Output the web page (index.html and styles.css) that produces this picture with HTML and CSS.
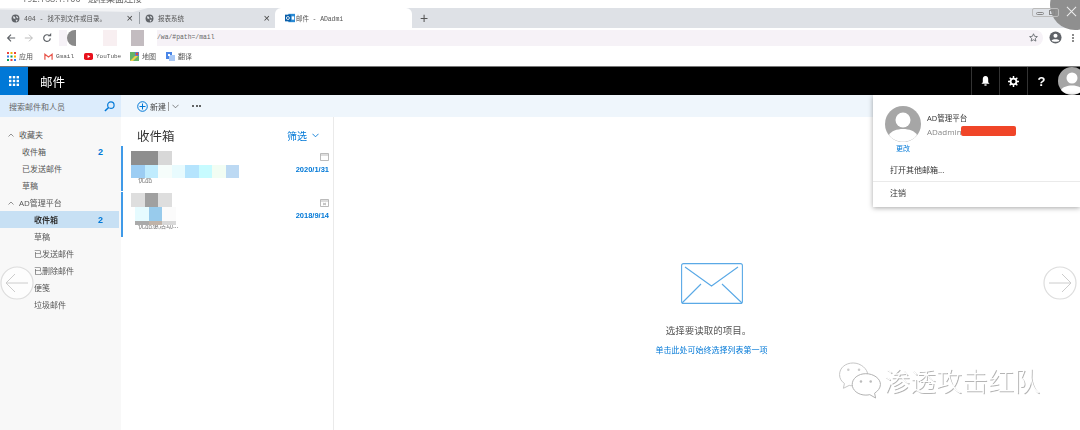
FILE: index.html
```html
<!DOCTYPE html>
<html lang="en">
<head>
    <meta charset="UTF-8">
    <title>邮件 - ADadmin</title>
    <link rel="stylesheet" href="styles.css">
</head>
<body>
<div class="page">
    <div class="rdp-strip"><span>192.168.1.100 - 远程桌面连接</span></div>

    <!-- browser tabs -->
    <div class="tabs">
        <div class="tab tab-first">
            <svg class="globe" viewBox="0 0 16 16"><circle cx="8" cy="8" r="7" fill="#5f6368"/><path d="M3 4l4 1 1 3-3 1zM10 3l3 3-2 2-2-3zM8 10l4 0-2 4z" fill="#dee1e6"/></svg>
            <span class="tab-title">404 - 找不到文件或目录。</span>
            <span class="tab-close">×</span>
        </div>
        <div class="tab-sep"></div>
        <div class="tab tab-second">
            <svg class="globe" viewBox="0 0 16 16"><circle cx="8" cy="8" r="7" fill="#5f6368"/><path d="M3 4l4 1 1 3-3 1zM10 3l3 3-2 2-2-3zM8 10l4 0-2 4z" fill="#dee1e6"/></svg>
            <span class="tab-title">报表系统</span>
            <span class="tab-close">×</span>
        </div>
        <div class="tab tab-active">
            <svg class="outlook" viewBox="0 0 12 12"><rect x="4" y="1" width="8" height="10" fill="#2a8ad4"/><rect x="0" y="2" width="7" height="8" fill="#0a5ea8"/><circle cx="3.5" cy="6" r="1.8" fill="none" stroke="#fff" stroke-width="1"/><path d="M8 4h3v4H8z" fill="#fff"/></svg>
            <span class="tab-title">邮件 - ADadmi</span>
        </div>
        <span class="tab-new">+</span>
    </div>

    <!-- browser toolbar -->
    <div class="toolbar">
        <svg class="nav-btn" viewBox="0 0 12 12"><path d="M11 6H2M6 2L2 6l4 4" fill="none" stroke="#5f6368" stroke-width="1.4"/></svg>
        <svg class="nav-btn nav-next" viewBox="0 0 12 12"><path d="M1 6h9M6 2l4 4-4 4" fill="none" stroke="#bbb" stroke-width="1.2"/></svg>
        <svg class="nav-btn nav-reload" viewBox="0 0 12 12"><path d="M10 6.5A4 4 0 1 1 8.800 3.200" fill="none" stroke="#5f6368" stroke-width="1.4"/><path d="M7 4h4V0z" fill="#5f6368"/></svg>
        <div class="omnibox">
            <div class="url-mosaic">
                <i class="um1"></i><i class="um2"></i><i class="um3"></i><i class="um4"></i><i class="um5"></i><i class="um6"></i>
            </div>
            <span class="url">/wa/#path=/mail</span>
            <svg class="star" viewBox="0 0 12 12"><path d="M6 1l1.500 3.400 3.700.4-2.800 2.400.8 3.600L6 9l-3.200 1.800.8-3.600L.8 4.800l3.700-.4z" fill="none" stroke="#5f6368" stroke-width="1.100"/></svg>
        </div>
        <svg class="profile" viewBox="0 0 14 14"><circle cx="7" cy="7" r="6.500" fill="#5f6368"/><circle cx="7" cy="5.200" r="2.200" fill="#fff"/><path d="M2.800 10.500c1-2 7.400-2 8.400 0-1.200 1.400-7.200 1.400-8.400 0z" fill="#fff"/></svg>
        <div class="kebab"><i></i><i></i><i></i></div>
    </div>

    <!-- bookmarks -->
    <div class="bookmarks">
        <span class="bm bm-apps">
            <svg class="bm-icon" viewBox="0 0 9 9"><rect x="0" y="0" width="2" height="2" fill="#e8453c"/><rect x="3.500" y="0" width="2" height="2" fill="#f4b400"/><rect x="7" y="0" width="2" height="2" fill="#e8453c"/><rect x="0" y="3.500" width="2" height="2" fill="#3b7de8"/><rect x="3.500" y="3.500" width="2" height="2" fill="#0f9d58"/><rect x="7" y="3.500" width="2" height="2" fill="#f4b400"/><rect x="0" y="7" width="2" height="2" fill="#0f9d58"/><rect x="3.500" y="7" width="2" height="2" fill="#e8453c"/><rect x="7" y="7" width="2" height="2" fill="#3b7de8"/></svg>
            应用
        </span>
        <span class="bm bm-gmail">
            <svg class="bm-icon" viewBox="0 0 10 9"><path d="M1 8V2l4 3 4-3v6" fill="none" stroke="#e8574c" stroke-width="1.400"/></svg>
            <em>Gmail</em>
        </span>
        <span class="bm bm-youtube">
            <svg class="bm-icon" viewBox="0 0 10 8"><rect width="10" height="8" rx="2" fill="#e8101c"/><path d="M4 2.300v3.400L7 4z" fill="#fff"/></svg>
            <em>YouTube</em>
        </span>
        <span class="bm bm-maps">
            <svg class="bm-icon" viewBox="0 0 9 9"><rect width="9" height="9" fill="#66b36b"/><path d="M0 9l9-9v3L3 9z" fill="#f2d14c"/><path d="M5 0h4v4H5z" fill="#4a86e8"/><circle cx="7" cy="2" r="1.400" fill="#dd4b3e"/></svg>
            地图
        </span>
        <span class="bm bm-translate">
            <svg class="bm-icon" viewBox="0 0 9 9"><rect width="6" height="7" fill="#4a86e8"/><rect x="3" y="3" width="6" height="6" fill="#a9c8f5"/><path d="M2 2h2v2H2z" fill="#fff"/></svg>
            翻译
        </span>
    </div>

    <!-- owa header -->
    <header class="owa-header">
        <div class="waffle">
            <svg viewBox="0 0 10 10" width="10" height="10" fill="#fff"><rect width="2.400" height="2.400"/><rect x="3.800" width="2.400" height="2.400"/><rect x="7.600" width="2.400" height="2.400"/><rect y="3.800" width="2.400" height="2.400"/><rect x="3.800" y="3.800" width="2.400" height="2.400"/><rect x="7.600" y="3.800" width="2.400" height="2.400"/><rect y="7.600" width="2.400" height="2.400"/><rect x="3.800" y="7.600" width="2.400" height="2.400"/><rect x="7.600" y="7.600" width="2.400" height="2.400"/></svg>
        </div>
        <div class="owa-title">邮件</div>
        <div class="owa-icons">
            <div class="owa-icon"><svg viewBox="0 0 10 11" width="9" height="10"><path d="M5 0c2.200 0 3 1.800 3 3.500V7l1.500 1.500h-9L2 7V3.500C2 1.800 2.800 0 5 0z" fill="#fff"/><rect x="3.800" y="9.200" width="2.400" height="1.500" fill="#fff"/></svg></div>
            <div class="owa-icon"><svg viewBox="0 0 12 12" width="11" height="11"><circle cx="6" cy="6" r="3.200" fill="none" stroke="#fff" stroke-width="2"/><path d="M6 0v2.500M6 9.500V12M0 6h2.500M9.500 6H12M1.800 1.800l1.800 1.800M8.400 8.400l1.800 1.800M10.200 1.800L8.400 3.600M3.600 8.400l-1.800 1.800" stroke="#fff" stroke-width="1.600"/></svg></div>
            <div class="owa-icon owa-help">?</div>
            <div class="owa-avatar">
                <svg viewBox="0 0 28 28" width="28" height="28"><circle cx="14" cy="14" r="14" fill="#a6a6a6"/><circle cx="14" cy="11" r="5.500" fill="#fff"/><path d="M3 23c3-6 19-6 22 0-5 6-17 6-22 0z" fill="#fff"/></svg>
            </div>
        </div>
    </header>

    <div class="owa-body">
        <aside class="sidebar">
            <div class="search">
                <span>搜索邮件和人员</span>
                <svg viewBox="0 0 12 12" width="11" height="11"><circle cx="7.500" cy="4.500" r="3.500" fill="none" stroke="#0078d7" stroke-width="1.300"/><path d="M5 7l-4 4" stroke="#0078d7" stroke-width="1.600"/></svg>
            </div>
            <nav class="folders">
                <div class="group"><svg viewBox="0 0 6 4" width="6" height="4"><path d="M.5 3.500L3 1l2.500 2.500" fill="none" stroke="#777" stroke-width=".8"/></svg>收藏夹</div>
                <div class="folder"><span>收件箱</span><b>2</b></div>
                <div class="folder"><span>已发送邮件</span></div>
                <div class="folder"><span>草稿</span></div>
                <div class="group"><svg viewBox="0 0 6 4" width="6" height="4"><path d="M.5 3.500L3 1l2.500 2.500" fill="none" stroke="#777" stroke-width=".8"/></svg>AD管理平台</div>
                <div class="folder sub selected"><span>收件箱</span><b>2</b></div>
                <div class="folder sub"><span>草稿</span></div>
                <div class="folder sub"><span>已发送邮件</span></div>
                <div class="folder sub"><span>已删除邮件</span></div>
                <div class="folder sub"><span>便笺</span></div>
                <div class="folder sub"><span>垃圾邮件</span></div>
            </nav>
        </aside>

        <div class="main">
            <div class="commands">
                <svg viewBox="0 0 11 11" width="11" height="11"><circle cx="5.500" cy="5.500" r="4.800" fill="none" stroke="#0078d7"/><path d="M5.500 2.500v6M2.500 5.500h6" stroke="#0078d7"/></svg>
                <span class="cmd-new">新建</span>
                <i class="cmd-sep"></i>
                <svg viewBox="0 0 8 5" width="7" height="5"><path d="M.5.500L4 4 7.500.500" fill="none" stroke="#555" stroke-width=".8"/></svg>
                <span class="cmd-more"><i></i><i></i><i></i></span>
            </div>
            <div class="panes">
                <section class="list">
                    <div class="list-head">
                        <h2>收件箱</h2>
                        <span class="filter">筛选</span>
                        <svg viewBox="0 0 8 5" width="7" height="5"><path d="M.5.500L4 4 7.500.500" fill="none" stroke="#0078d7"/></svg>
                    </div>
                    <div class="msg msg-a">
                        <div class="tiles tiles-a"><i class="g1"></i><i class="g1"></i><i class="g2"></i></div>
                        <div class="tiles tiles-a2"><i class="b1"></i><i class="b2"></i><i class="b3"></i><i class="b4"></i><i class="b5"></i><i class="b6"></i><i class="b7"></i><i class="b8"></i></div>
                        <span class="msg-clip">优品</span>
                        <div class="msg-side">
                            <svg viewBox="0 0 9 9" width="9" height="9"><path d="M.5 1.500h8v7h-8zM.5 3h8" fill="none" stroke="#aaa" stroke-width=".8"/></svg>
                            <span>2020/1/31</span>
                        </div>
                    </div>
                    <div class="msg msg-b">
                        <div class="tiles tiles-b"><i class="g3"></i><i class="g4"></i><i class="g3"></i></div>
                        <div class="tiles tiles-b2"><i class="b9"></i><i class="b10"></i><i class="b11"></i></div>
                        <div class="tiles tiles-b3"><i class="g5"></i><i class="g6"></i><i class="g7"></i></div>
                        <span class="msg-clip msg-clip-b">优品惠活动...</span>
                        <div class="msg-side">
                            <svg viewBox="0 0 9 9" width="9" height="9"><path d="M.5 1.500h8v7h-8zM.5 3h8M3 5l3 2M6 5L3 7" fill="none" stroke="#aaa" stroke-width=".8"/></svg>
                            <span>2018/9/14</span>
                        </div>
                    </div>
                </section>
                <section class="reading">
                    <svg class="envelope" viewBox="0 0 62 41" width="62" height="41"><rect x=".6" y=".6" width="60.800" height="39.800" rx="2" fill="none" stroke="#5aa9e6" stroke-width="1.100"/><path d="M4 4l26.500 19L57 4M1 40l19-19M61 40L41 21" fill="none" stroke="#5aa9e6" stroke-width="1.100"/></svg>
                    <p class="pick">选择要读取的项目。</p>
                    <a class="pick-link">单击此处可始终选择列表第一项</a>
                </section>
            </div>
        </div>
    </div>

    <!-- account dropdown -->
    <div class="account">
        <div class="account-top">
            <div class="account-pic">
                <svg viewBox="0 0 36 36" width="36" height="36"><circle cx="18" cy="18" r="18" fill="#a6a6a6"/><circle cx="18" cy="14" r="7.500" fill="#fff"/><path d="M4 29c4-8 24-8 28 0-6 9-22 9-28 0z" fill="#fff"/></svg>
                <a>更改</a>
            </div>
            <div class="account-info">
                <div class="account-name">AD管理平台</div>
                <div class="account-mail">ADadmin@<i class="redact"></i></div>
            </div>
        </div>
        <div class="account-link">打开其他邮箱...</div>
        <div class="account-link account-logout">注销</div>
    </div>

    <!-- remote desktop corner -->
    <div class="rdp-sheen"></div>
    <div class="rdp-corner">
        <svg viewBox="0 0 12 12" width="11" height="11"><path d="M1 1l10 10M11 1L1 11" stroke="#eee" stroke-width="1.100"/></svg>
    </div>
    <div class="rdp-btns"><i class="rdp-min"></i><i></i></div>

    <!-- viewer arrows -->
    <div class="arrow arrow-left"><svg viewBox="0 0 34 34" width="34" height="34"><circle cx="17" cy="17" r="16" fill="#fff" fill-opacity=".7" stroke="#ddd" stroke-width="1.200"/><path d="M28 17H7M15 8l-9 9 9 9" fill="none" stroke="#ccc"/></svg></div>
    <div class="arrow arrow-right"><svg viewBox="0 0 34 34" width="34" height="34"><circle cx="17" cy="17" r="16" fill="#fff" stroke="#ddd" stroke-width="1.200"/><path d="M6 17h21M19 8l9 9-9 9" fill="none" stroke="#ccc"/></svg></div>

    <!-- watermark -->
    <div class="watermark">
        <svg viewBox="0 0 44 38" width="44" height="37"><path d="M15 1C7 1 1 6 1 13c0 4 2 7 5 9l-1 5 6-3c1 .3 2 .4 4 .4 8 0 15-5 15-11S23 1 15 1z" fill="#fff" stroke="#c4c4c4"/><path d="M28 12c-8 0-14 5-14 11s6 11 14 11c1.500 0 3-.2 4-.5l6 3.500-1-5c3-2 6-5 6-9 0-6-7-11-15-11z" fill="#fff" stroke="#b0b0b0"/><circle cx="10" cy="8" r="1.300" fill="#ccc"/><circle cx="21" cy="8" r="1.300" fill="#ccc"/><circle cx="23" cy="20" r="1.300" fill="#bbb"/><circle cx="33" cy="20" r="1.300" fill="#bbb"/></svg>
        <span>渗透攻击红队</span>
    </div>
</div>
</body>
</html>
```

FILE: styles.css
```css
* {
    box-sizing: border-box;
}
html, body {
    margin: 0;
    height: 100%;
    overflow: hidden;
    background: #fff;
}
.page {
    position: relative;
    width: 1080px;
    height: 430px;
    overflow: hidden;
    font-family: "Open Sans", "Noto Sans CJK SC", sans-serif;
    font-size: 8px;
    color: #444;
    filter: blur(0.3px);
}

/* browser chrome */
.rdp-strip {
    height: 8px;
    padding-left: 22px;
    overflow: hidden;
    font-size: 9px;
    line-height: 10px;
    color: #666;
}
.rdp-strip span {
    display: block;
    margin-top: -6px;
}
.tabs {
    height: 20px;
    background: #dee1e6;
    display: flex;
    align-items: stretch;
    font-family: "Liberation Mono", "Noto Sans CJK SC", monospace;
    font-size: 6.5px;
    color: #555;
}
.tab {
    display: flex;
    align-items: center;
}
.tab-first {
    width: 139px;
    padding: 0 6px 0 11px;
}
.tab-second {
    width: 135px;
    padding: 0 5px 0 5px;
}
.tab-active {
    width: 137px;
    padding-left: 10px;
    background: #fff;
    border-radius: 6px 6px 0 0;
}
.tab-sep {
    width: 1px;
    margin: 4px 0;
    background: #9aa0a6;
}
.globe {
    width: 9px;
    height: 9px;
    margin-right: 3px;
    flex: none;
}
.outlook {
    width: 10px;
    height: 10px;
    flex: none;
}
.tab-title {
    flex: 1;
    padding-left: 1px;
    white-space: nowrap;
}
.tab-active .tab-title {
    letter-spacing: -0.1px;
}
.tab-close {
    font-family: "Liberation Sans", sans-serif;
    font-size: 11px;
    color: #444;
}
.tab-new {
    margin-left: 8px;
    font-family: "Liberation Sans", sans-serif;
    font-size: 14px;
    line-height: 20px;
    color: #555;
}
.toolbar {
    height: 19px;
    display: flex;
    align-items: center;
    padding-left: 6px;
}
.nav-btn {
    width: 10px;
    height: 10px;
    margin-right: 8px;
    flex: none;
}
.nav-reload {
    margin-right: 7px;
}
.omnibox {
    width: 984px;
    height: 16px;
    margin-right: 6px;
    padding-right: 5px;
    background: #f6f2f7;
    border-radius: 8px;
    display: flex;
    align-items: center;
    font-family: "Liberation Mono", monospace;
    font-size: 6.4px;
    color: #666;
}
.url-mosaic {
    width: 98px;
    height: 16px;
    display: flex;
    background: #fff;
}
.url-mosaic i {
    display: block;
    height: 16px;
}
.um1 {
    width: 8px;
    background: #f6f2f7;
}
.um2 {
    width: 9px;
    background: #8a8a8a;
    border-radius: 8px 0 0 8px;
}
.um3 {
    width: 27px;
    background: #fff;
}
.um4 {
    width: 14px;
    background: #f8eff1;
}
.um5 {
    width: 14px;
    background: #fff;
}
.um6 {
    width: 13px;
    background: #c3bcc0;
}
.url {
    flex: 1;
}
.star {
    width: 9px;
    height: 9px;
}
.profile {
    width: 13px;
    height: 13px;
    margin-right: 10px;
    flex: none;
}
.kebab {
    display: flex;
    flex-direction: column;
    gap: 1px;
}
.kebab i {
    width: 2px;
    height: 2px;
    background: #666;
    border-radius: 50%;
}
.bookmarks {
    height: 20px;
    display: flex;
    align-items: center;
    padding: 0 0 1px 7px;
    border-bottom: 1px solid #777;
    font-size: 7px;
    color: #555;
}
.bm {
    display: flex;
    align-items: center;
    gap: 3px;
    white-space: nowrap;
}
.bm em {
    font-style: normal;
    font-family: "Liberation Mono", monospace;
    font-size: 6px;
}
.bm-icon {
    width: 9px;
    height: 9px;
    flex: none;
}
.bm-apps {
    width: 37px;
}
.bm-gmail {
    width: 40px;
}
.bm-youtube {
    width: 46px;
}
.bm-maps {
    width: 36px;
}

/* owa header */
.owa-header {
    height: 28px;
    background: #000;
    display: flex;
    align-items: center;
    color: #fff;
}
.waffle {
    width: 28px;
    height: 28px;
    background: #0078d7;
    display: flex;
    align-items: center;
    justify-content: center;
}
.owa-title {
    margin-left: 12px;
    font-size: 12.5px;
}
.owa-icons {
    margin-left: auto;
    display: flex;
    align-items: center;
    height: 28px;
}
.owa-icon {
    width: 28px;
    height: 28px;
    border-left: 1px solid #333;
    display: flex;
    align-items: center;
    justify-content: center;
}
.owa-help {
    font-family: "Liberation Sans", sans-serif;
    font-size: 13px;
    font-weight: bold;
}
.owa-avatar {
    width: 25px;
    height: 28px;
    padding-left: 3px;
    overflow: hidden;
    flex: none;
}
.owa-avatar svg {
    display: block;
}

/* owa body */
.owa-body {
    height: 335px;
    display: flex;
}
.sidebar {
    width: 121px;
    background: #f8f8f8;
    flex: none;
}
.search {
    height: 22px;
    padding: 0 6px 0 9px;
    background: #dcecfc;
    display: flex;
    align-items: center;
    justify-content: space-between;
    color: #666;
}
.folders {
    padding-top: 9px;
}
.group {
    height: 17px;
    padding-left: 8px;
    display: flex;
    align-items: center;
    gap: 5px;
    color: #555;
}
.folder {
    height: 17px;
    margin-right: 2px;
    padding: 0 16px 0 22px;
    display: flex;
    align-items: center;
    justify-content: space-between;
    color: #555;
}
.folder b {
    color: #0078d7;
    font-family: "Liberation Sans", sans-serif;
    font-size: 9px;
}
.sub {
    padding-left: 34px;
}
.selected {
    background: #c7e0f4;
    color: #333;
    font-weight: bold;
}
.main {
    flex: 1;
    display: flex;
    flex-direction: column;
}
.commands {
    height: 22px;
    padding-left: 16px;
    background: #eff6fc;
    display: flex;
    align-items: center;
    color: #444;
}
.cmd-new {
    margin-left: 2px;
}
.cmd-sep {
    width: 1px;
    height: 9px;
    margin: 0 3px 0 2px;
    background: #999;
}
.cmd-more {
    margin-left: 13px;
    display: flex;
    gap: 1.5px;
}
.cmd-more i {
    width: 2px;
    height: 2px;
    background: #333;
    border-radius: 50%;
}
.panes {
    flex: 1;
    display: flex;
}
.list {
    width: 213px;
    border-right: 1px solid #eaeaea;
    flex: none;
}
.list-head {
    height: 29px;
    padding: 7px 14px 0 16px;
    display: flex;
    align-items: center;
}
.list-head h2 {
    margin: 0;
    font-size: 12.500px;
    font-weight: 400;
    color: #333;
}
.filter {
    margin-left: auto;
    margin-right: 5px;
    font-size: 10px;
    color: #0078d7;
}
.msg {
    position: relative;
    height: 45px;
    border-left: 2px solid #3f9ae8;
    margin-bottom: 1px;
    overflow: hidden;
}
.tiles {
    position: absolute;
    display: flex;
    z-index: 1;
}
.tiles i {
    display: block;
    width: 13.500px;
    height: 100%;
}
.tiles-a {
    left: 8px;
    top: 5px;
    height: 14px;
}
.tiles-a2 {
    left: 8px;
    top: 19px;
    height: 13px;
}
.tiles-b {
    left: 8px;
    top: 1px;
    height: 14px;
}
.tiles-b2 {
    left: 12px;
    top: 15px;
    height: 14px;
}
.tiles-b3 {
    left: 12px;
    top: 29px;
    height: 4px;
}
.g1 { background: #8e8e8e; }
.g2 { background: #d8d8d8; }
.g3 { background: #dedede; }
.g4 { background: #a0a0a0; }
.g5 { background: #aaa; }
.g6 { background: #c0b3a8; }
.g7 { background: #d8d8d8; }
.b1 { background: #9ccdf3; }
.b2 { background: #c0ecfe; }
.b3 { background: #f6fdfb; }
.b4 { background: #e8fbfe; }
.b5 { background: #b5e4fd; }
.b6 { background: #c7fbff; }
.b7 { background: #f2fdf3; }
.b8 { background: #bcd9f3; }
.b9 { background: #e6fbff; }
.b10 { background: #98cbec; }
.b11 { background: #fbfbfb; }
.msg-clip {
    position: absolute;
    left: 15px;
    top: 30px;
    height: 7px;
    line-height: 7px;
    font-size: 7px;
    color: #777;
    white-space: nowrap;
}
.msg-clip-b {
    top: 30px;
}
.msg-side {
    height: 100%;
    padding: 6px 4px 0 0;
    display: flex;
    flex-direction: column;
    align-items: flex-end;
    gap: 4px;
    font-family: "Liberation Sans", sans-serif;
    font-size: 7.500px;
    font-weight: bold;
    color: #0078d7;
}
.reading {
    flex: 1;
    display: flex;
    flex-direction: column;
    align-items: center;
    padding: 146px 0 0 9px;
}
.pick {
    margin: 21px 6px 0 0;
    font-size: 9.500px;
    line-height: 12px;
    color: #555;
}
.pick-link {
    margin-top: 7px;
    line-height: 12px;
    color: #0078d7;
}

/* account dropdown */
.account {
    position: absolute;
    left: 873px;
    top: 95px;
    width: 207px;
    height: 112px;
    background: #fff;
    box-shadow: 0 1px 5px rgba(0, 0, 0, 0.35);
}
.account-top {
    height: 65px;
    padding: 11px 0 0 12px;
    display: flex;
}
.account-pic {
    width: 42px;
    display: flex;
    flex-direction: column;
    align-items: center;
    flex: none;
    padding-right: 6px;
}
.account-pic svg {
    display: block;
}
.account-pic a {
    margin-top: 1px;
    font-size: 7px;
    color: #0078d7;
}
.account-info {
    padding-top: 6px;
    color: #333;
    font-size: 7.500px;
    white-space: nowrap;
}
.account-mail {
    margin-top: 2px;
    height: 12px;
    display: flex;
    align-items: center;
    color: #888;
    font-size: 8px;
}
.redact {
    width: 55px;
    height: 10px;
    margin-left: -8px;
    background: #f04528;
    border-radius: 2px;
}
.account-link {
    height: 21px;
    padding: 0 0 2px 17px;
    display: flex;
    align-items: center;
    color: #333;
}
.account-logout {
    height: 24px;
    border-top: 1px solid #eaeaea;
}

/* overlays */
.rdp-sheen {
    position: absolute;
    left: 0;
    top: 8px;
    width: 148px;
    height: 4px;
    background: #fff;
    opacity: 0.6;
    clip-path: polygon(0 0, 100% 0, 90% 100%, 0 40%);
}
.rdp-corner {
    position: absolute;
    left: 1050px;
    top: -20px;
    width: 50px;
    height: 50px;
    padding: 26px 0 0 16px;
    background: #8f8f8f;
    border-radius: 50%;
}
.rdp-corner svg {
    display: block;
}
.rdp-btns {
    position: absolute;
    left: 1032px;
    top: 8px;
    width: 27px;
    height: 9px;
    border: 1px solid #bbb;
    border-radius: 2px;
    display: flex;
    align-items: center;
    justify-content: space-around;
}
.rdp-btns i {
    width: 6px;
    height: 5px;
    border: 1px solid #888;
}
.rdp-btns .rdp-min {
    width: 8px;
    height: 3px;
    border-radius: 2px;
    margin-top: 2px;
}
.arrow {
    position: absolute;
    top: 266px;
}
.arrow svg {
    display: block;
}
.arrow-left {
    left: 0;
}
.arrow-right {
    left: 1043px;
}
.watermark {
    position: absolute;
    left: 838px;
    top: 362px;
    display: flex;
    align-items: center;
    gap: 3px;
    font-size: 26px;
    line-height: 36px;
    font-weight: 300;
    color: #fff;
    text-shadow: 1px 1px 0.5px #b5b5b5;
}
.watermark span {
    margin-left: -1px;
}
```
